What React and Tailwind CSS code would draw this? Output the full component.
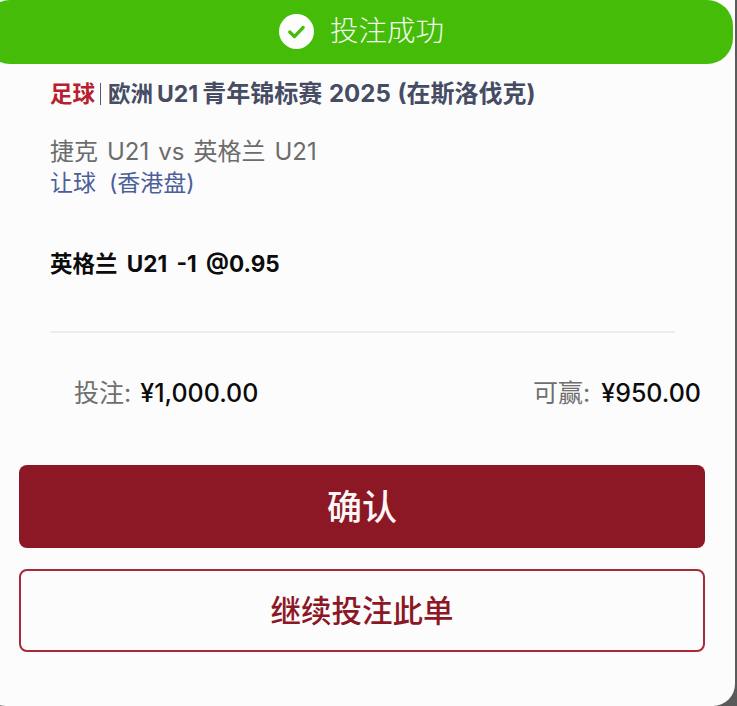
import React from "react";

const FONT = "font-['Inter','Noto_Sans_CJK_SC',sans-serif]";

function CheckBadge() {
  return (
    <svg width="35" height="35" viewBox="0 0 34 34" className="shrink-0">
      <circle cx="17" cy="17" r="17" fill="#fdfdfd" />
      <path d="M10.5 17.5 L15 22 L23.5 13" fill="none" stroke="#45bd08" strokeWidth="3.2" strokeLinecap="round" strokeLinejoin="round" />
    </svg>
  );
}

export default function App() {
  return (
    <div className={`h-[706px] w-[737px] overflow-hidden bg-[#5a5a5a] ${FONT}`}>
      <div className="ml-[-16px] flex h-[706px] w-[751px] flex-col rounded-b-[22px] bg-[#fcfcfd]">
        <div className="flex h-[64px] w-[749px] shrink-0 items-center justify-center gap-[16px] rounded-[26px] bg-[#45bd08] pb-[1px] pl-[6px]">
          <CheckBadge />
          <span className="pb-[1px] text-[28.5px] font-light leading-none text-[#f4fbef]">投注成功</span>
        </div>

        <div className="pl-[67px] pr-[60px]">
          <div className="mt-[16px] ml-[-1px] flex h-[28px] items-center font-bold leading-none">
            <span className="text-[22.5px] text-[#b7202e]">足球</span>
            <span className="mx-[5px] h-[22px] w-px bg-[#55596b]" />
            <span className="ml-[2px] text-[22.5px] text-[#464c63]">欧洲</span>
            <span className="mx-[4px] text-[23px] text-[#464c63]">U21</span>
            <span className="text-[24px] text-[#464c63] [word-spacing:1px]">青年锦标赛 2025 (在斯洛伐克)</span>
          </div>
          <div className="mt-[29px] ml-[-1px] text-[24px] leading-[30px] text-[#6c6c6c] [word-spacing:2.25px]">捷克 U21 vs 英格兰 U21</div>
          <div className="mt-[1px] ml-[-1px] text-[23px] leading-[30px] text-[#4d5f98]">让球&nbsp; (香港盘)</div>
          <div className="mt-[51px] ml-[-1px] text-[22.5px] font-bold leading-[30px] text-[#0c0c0c] [word-spacing:4px]">英格兰 U21 -1 @0.95</div>
          <div className="mt-[52px] ml-[-1px] h-[2px] bg-[#ececec]" />
        </div>

        <div className="mt-[45px] flex items-center justify-between pl-[90px] pr-[34px] text-[25px] leading-[30px] [word-spacing:2px]">
          <div>
            <span className="text-[#6f6f6f]">投注: </span>
            <span className="font-medium text-[#0c0c0c]">¥1,000.00</span>
          </div>
          <div>
            <span className="mr-[2px] text-[#6f6f6f]">可赢: </span>
            <span className="font-medium text-[#0c0c0c]">¥950.00</span>
          </div>
        </div>

        <div className="mt-[57px] flex flex-col gap-[21px] pl-[35px] pr-[30px]">
          <button className="h-[83px] rounded-[8px] bg-[#8c1725] pt-[1px] text-[35px] font-medium leading-none text-[#fdf7f7]">确认</button>
          <button className="h-[83px] rounded-[8px] border-2 border-[#a52a3a] pt-[1px] text-[30.5px] font-medium leading-none text-[#8c1725]">继续投注此单</button>
        </div>
      </div>
    </div>
  );
}
